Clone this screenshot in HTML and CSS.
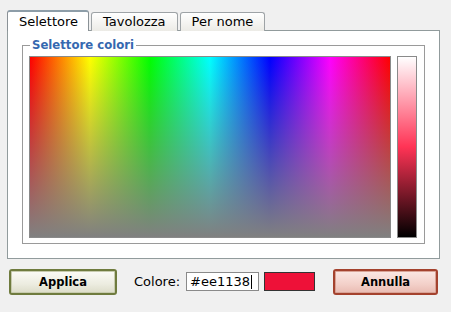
FILE: index.html
```html
<!DOCTYPE html>
<html>
<head>
<meta charset="utf-8">
<link rel="stylesheet" href="styles.css">
</head>
<body>
<div class="dialog">
  <div class="tabs">
    <div class="tab active">Selettore</div>
    <div class="tab">Tavolozza</div>
    <div class="tab">Per nome</div>
  </div>
  <div class="panel">
    <fieldset class="group">
      <legend>Selettore colori</legend>
      <div class="picker">
        <div class="spectrum"><div class="fade"></div></div>
        <div class="slider"></div>
      </div>
    </fieldset>
  </div>
  <div class="actions">
    <button class="btn ok">Applica</button>
    <label class="lbl">Colore:</label>
    <div class="input">#ee1138<span class="caret"></span></div>
    <div class="swatch"></div>
    <button class="btn cancel">Annulla</button>
  </div>
</div>
</body>
</html>
```
FILE: styles.css
```css
* { box-sizing: border-box; }
html, body { margin: 0; padding: 0; }
body {
  background: #f0f0f0;
  font-family: "DejaVu Sans", Verdana, sans-serif;
  font-size: 13px;
  color: #000;
  width: 451px;
  height: 312px;
  overflow: hidden;
}
.dialog { padding: 10px 11px 0 7px; }
.tabs {
  display: flex;
  align-items: flex-end;
  gap: 2px;
  height: 21px;
  position: relative;
  z-index: 1;
}
.tab {
  height: 19px;
  padding: 0 11px;
  border: 1px solid #9ea3a6;
  border-bottom: none;
  border-radius: 3px 3px 0 0;
  background: linear-gradient(#ffffff, #ecebe6);
  font-size: 13px;
  line-height: 18px;
  color: #000;
}
.tab.active {
  height: 21px;
  background: #fff;
  border-color: #8a9196;
  border-top: 2px solid #8d9da8;
  width: 82px;
  line-height: 19px;
}
.panel {
  background: #fff;
  border: 1px solid #919b9c;
  margin-top: -1px;
  height: 229px;
  padding: 8px 15px 0 14px;
}
.group {
  margin: 0;
  border: 1px solid #9a9a9a;
  padding: 5px 7px 5px 6px;
}
.group legend {
  padding: 0 2px;
  margin-left: 1px;
  font-weight: bold;
  font-size: 11.7px;
  color: #3568b0;
  line-height: 12px;
}
.picker { display: flex; gap: 6px; }
.spectrum {
  width: 362px;
  height: 182px;
  border: 1px solid #8a8a8a;
  background: linear-gradient(to right, #ff0000 0%, #ffff00 16.67%, #00ff00 33.33%, #00ffff 50%, #0000ff 66.67%, #ff00ff 83.33%, #ff0000 100%);
  position: relative;
}
.fade {
  position: absolute;
  inset: 0;
  background: linear-gradient(to bottom, rgba(128,128,128,0) 0%, rgba(128,128,128,1) 100%);
}
.slider {
  width: 20px;
  height: 182px;
  border: 1px solid #8a8a8a;
  background: linear-gradient(to bottom, #ffffff 0%, #ff3355 50%, #000000 100%);
}
.actions {
  display: flex;
  align-items: center;
  height: 45px;
  padding: 0 0 0 2px;
}
.btn {
  font-family: "DejaVu Sans", Verdana, sans-serif;
  font-weight: bold;
  font-size: 11.5px;
  height: 26px;
  border-radius: 3px;
  padding: 0;
  color: #000;
}
.ok {
  width: 108px;
  border: 2px solid #6f7b3e;
  background: linear-gradient(#fbfbf6, #ecece0 60%, #dcdcc8);
  box-shadow: inset 0 0 0 1px #c7cbae;
}
.lbl { margin-left: 17px; }
.input {
  margin-left: 6px;
  width: 73px;
  height: 19px;
  border: 1px solid #8a8a8a;
  background: #fff;
  font-size: 13px;
  line-height: 17px;
  padding-left: 3px;
  display: flex;
  align-items: center;
}
.caret { width: 1px; height: 14px; background: #000; margin-left: 1px; }
.swatch {
  margin-left: 5px;
  width: 51px;
  height: 19px;
  background: #ee1138;
  border: 1px solid #333;
}
.cancel {
  margin-left: 18px;
  width: 105px;
  border: 2px solid #a4422e;
  background: linear-gradient(#fbe7e3, #f3d0c9 60%, #e9bbb2);
  box-shadow: inset 0 0 0 1px #d9a396;
}
```
